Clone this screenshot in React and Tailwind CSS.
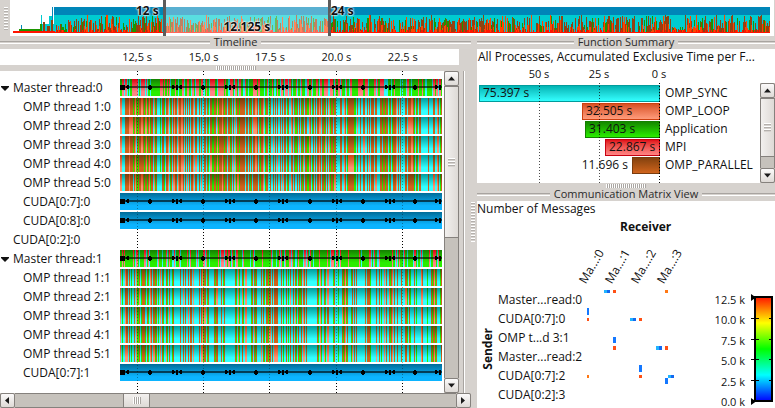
import React from "react";

const STRIPES = {
  masterA: [
    "g2r2c1r2c1g1c1g2r6c1g1c1r4c1r1c1g2c1g9r3g1r1g2r1g1r1c1g4r1g2c1g3r2c1g2r2g2c1r2g1c1r3g2r2c2g1r1g2c1r5g2c1r6g1r1",
    "c2r3g1c1r2g1c1r2g2c2r1g2c1g4r4g1r2g4c1g2r1c1g3r1g1c2g1r1g2c1r2g1c1r3c1r2g1c1g3r1c1g2c1r1g3c2r2g2r1c1g3r2g1c1r2g2r4",
    "g2r2c1r1g3c1r1g2c1r2g6r5g2r3c1g5r2c1r1g2r4c4g3c1g2r1g5c1g1c1g3c1r2g2c1g6r1g3r1g2c2g5c1r2g1r2c1r2",
  ],
  ompA: [
    "o2c3b4o1b3g1b1o1g1b1g1b2o2b1g1b1o1g1b1o1g1b2c1o1g1b1c3g1c1b2g1c1b2o1c1g1b1c1b1o1b2c1o1b2o2b1c1b1c1b1c1b1c1b2o1c1b2c2b1c1b1c2b2c1b1g1c1b2g2b2g1o1g1b3o1b1g1b2c1",
    "b2g1b1c1b1c1o1g1b2g1b5c1b2c1b1g1b1c1b2o2b1c1b1g1b2o1c1g1b2c1g1b1c2b1c1b1c1b1c2b1c1b1c1b2c1g1b1c2o1b1c1b1g2b1c1b1c1b1g1b1c1b2g2o1b1c1g1b1c1b1c1b2o1b1c1",
    "c4b2c2o1b1c1g1b6g2c1b1c2b1c2b2c2b1c1b1c1b3c1b2c3b2g1b2g1b2c1g1b1c1g1b3o1c1b1c1b1c4b2c1b3o2b1g1c1b1g1c1b2c7b1",
  ],
  masterB: [
    "g2r1g1r1g8r1g1c1r2g1c1g4r2c1g1r1c1g7c1r1g3c1g3r1c1g1r1g2c2r1c1g3r1c1g6r1g1c1r1g5c1r1c1g4r2c1r1g2c1g8r1g1c1r3c1r2g1r1",
    "r2g1c1r1g2c1r2g4c1r1g6c1g2r1c1g7r1g8r1c1g3c1g2r1c1r1g2c1r1g3r2c1r1g2c2g1r1g4c1r2c1r1g1c1r1g2c1g5r1g7r1g2c1r1",
    "r2g1c1r1g7r1g10r1g1c1g7r2c1g1c1r1g2c2r1g12r1g2c1r1c1g1r1g3c1r1g2c1g5c1r2g1c1g2c1r1c1g6r1c1g2r1",
  ],
  ompB: [
    "o1c1g1c2o1b2c1b1c1g1c2b1c1o1g2b1c1g1b3g1c1b1g1c1o1b1c1b2g1b1c1g1c1o1c1b1g1c2b1g1c1b1c2g1b1c6b1c2b1c1b1c2b1c1b2c1o1c5b1c1b1o1g1b2c1g1b1c5b1g1b2c3b1c1g1b1c5",
    "c7b1g1c1o1g1c2b1g1c1o2c4g1b1c1b1g1b1c4b1c1b1g1c1b2g1b2c1b1c1b4c3b1c1g1c2b1c1g1c1b1c2b1c1b1g1c1b1g2b1c1o1b1c1b1c3",
    "c2g1c3b1g1b1o1g1b1c3g1b1c1b1c1b1c8b1c1b3g1c5b1c2b1c1g1c2o1c1b1c2b1g1b1o1c1b1c2b1c3b1c3b2g1c1b1g1c3b1c1g1c4o1b1c2",
  ],
};

const GRADIENTS = {
  c: ["#009c9c", "#33ffff"],
  b: ["#7a3c0e", "#d0641c"],
  o: ["#cc4010", "#ff9472"],
  g: ["#148000", "#2aee00"],
  r: ["#dc0010", "#ff8484"],
};

const SECTION = 108;
const LANE = 322;

function toRuns(sections, variant) {
  const runs = [];
  sections.forEach((text, s) => {
    let x = s * SECTION;
    const end = Math.min(LANE, x + SECTION);
    const parts = text.match(/[a-z]\d+/g);
    for (let i = 0; x < end; i += 1) {
      const p = parts[i % parts.length];
      let color = p[0];
      if (variant > 0 && (i * 7 + variant * 5 + s) % 11 === 0) {
        color = { b: "o", o: "b", g: "c", c: "c", r: "r" }[color];
      }
      const w = Math.min(Number(p.slice(1)), end - x);
      runs.push({ x, w, color });
      x += w;
    }
  });
  return runs;
}

function Markers() {
  const singles = [30, 83, 136, 190, 243, 295];
  const groups = [4, 57, 110, 163, 217, 270, 320];
  return (
    <g fill="#000">
      <rect x="0" y="7" width={LANE} height="2" opacity="0.6" />
      {singles.map((x) => (
        <path key={x} d={`M${x - 1} 6h2v1h1v3h-1v1h-2v-1h-1v-3h1z`} />
      ))}
      {groups.map((x) => (
        <path
          key={x}
          d={`M${x - 5} 6h2v1h1v1h1v-2h2v2h1v-1h1v-1h2v4h-2v-1h-1v-1h-1v3h-2v-3h-1v1h-1v1h-2z`}
        />
      ))}
      <rect x="0" y="6" width="4" height="5" />
    </g>
  );
}

function Lane({ kind, variant = 0 }) {
  if (!kind) return <div className="h-[17px] flex-1" />;
  return (
    <svg
      className="h-[17px] min-w-0 flex-1"
      viewBox={`0 0 ${LANE} 17`}
      preserveAspectRatio="none"
      shapeRendering="crispEdges"
    >
      {kind === "cuda" ? (
        <rect width={LANE} height="17" fill="url(#lane-cuda)" />
      ) : (
        toRuns(STRIPES[kind], variant).map((r) => (
          <rect key={r.x} x={r.x} y="0" width={r.w} height="17" fill={`url(#lane-${r.color})`} />
        ))
      )}
      {(kind === "cuda" || kind.startsWith("master")) && <Markers />}
    </svg>
  );
}

const ROWS = [
  { label: "Master thread:0", level: 0, kind: "masterA" },
  { label: "OMP thread 1:0", level: 1, kind: "ompA", variant: 0 },
  { label: "OMP thread 2:0", level: 1, kind: "ompA", variant: 1 },
  { label: "OMP thread 3:0", level: 1, kind: "ompA", variant: 2 },
  { label: "OMP thread 4:0", level: 1, kind: "ompA", variant: 3 },
  { label: "OMP thread 5:0", level: 1, kind: "ompA", variant: 4 },
  { label: "CUDA[0:7]:0", level: 1, kind: "cuda" },
  { label: "CUDA[0:8]:0", level: 1, kind: "cuda" },
  { label: "CUDA[0:2]:0", level: 2, kind: null },
  { label: "Master thread:1", level: 0, kind: "masterB" },
  { label: "OMP thread 1:1", level: 1, kind: "ompB", variant: 0 },
  { label: "OMP thread 2:1", level: 1, kind: "ompB", variant: 1 },
  { label: "OMP thread 3:1", level: 1, kind: "ompB", variant: 2 },
  { label: "OMP thread 4:1", level: 1, kind: "ompB", variant: 3 },
  { label: "OMP thread 5:1", level: 1, kind: "ompB", variant: 4 },
  { label: "CUDA[0:7]:1", level: 1, kind: "cuda" },
];

const TICKS = ["12,5 s", "15,0 s", "17.5 s", "20.0 s", "22.5 s"];

function overviewBars() {
  let seed = 11;
  const rnd = () => {
    seed = (seed * 16807) % 2147483647;
    return seed / 2147483647;
  };
  const bars = [];
  const colors = ["#8b4513", "#8b4513", "#a03c10", "#ff4500", "#1c9600"];
  for (let x = 42; x < 757; x += 1) {
    const low = x > 657 && x < 670;
    const tall = rnd() < 0.6 ? 10 + rnd() * 8 : 4 + rnd() * 8;
    const h = Math.round(low ? 2 + rnd() * 4 : x < 54 ? tall * 0.6 : tall);
    const color = colors[Math.floor(rnd() * 5)];
    if (rnd() > 0.18) {
      bars.push({ x, h, color });
      if (rnd() < 0.25) bars.push({ x, h: Math.round(h * 0.5), color: "#ff4500" });
    }
    bars.push({ x, h: rnd() < 0.3 ? 3 : 1, color: "#ff1400" });
  }
  return bars;
}

function Overview() {
  return (
    <svg
      className="block h-[33px] w-full"
      viewBox="0 0 757 33"
      preserveAspectRatio="none"
      shapeRendering="crispEdges"
    >
      <rect x="41" y="7" width="716" height="8" fill="#0086b8" />
      <rect x="39" y="7" width="1" height="26" fill="#0086b8" />
      <rect x="41" y="15" width="716" height="18" fill="#00ccd0" />
      <rect x="27" y="24" width="14" height="9" fill="#00ccd0" />
      <rect x="36" y="16" width="3" height="17" fill="#00ccd0" />
      <rect x="27" y="24" width="2" height="9" fill="#1c9600" />
      <rect x="28" y="15" width="1" height="9" fill="#00ccd0" />
      <rect x="30" y="22" width="2" height="11" fill="#8b4513" />
      <rect x="34" y="26" width="3" height="7" fill="#8b4513" />
      <rect x="38" y="20" width="2" height="13" fill="#8b4513" />
      <rect x="6" y="29" width="23" height="3" fill="#1c9600" />
      <rect x="8" y="25" width="1" height="4" fill="#0086b8" />
      <rect x="0" y="31" width="42" height="2" fill="#ff1400" />
      {overviewBars().map((b, i) => (
        <rect key={i} x={b.x} y={33 - b.h} width="1" height={b.h} fill={b.color} />
      ))}
    </svg>
  );
}

const GRIP_V =
  "bg-[repeating-linear-gradient(180deg,#ffffff_0px,#ffffff_1px,#b4b0ac_1px,#b4b0ac_2px,#d6d2ce_2px,#d6d2ce_3px)]";
const GRIP_H =
  "bg-[repeating-linear-gradient(90deg,#ffffff_0px,#ffffff_1px,#aaa6a2_1px,#aaa6a2_2px)]";

function Arrow({ dir }) {
  const d = {
    up: "M0 5h7L3.5 1z",
    down: "M0 1h7L3.5 5z",
    left: "M5 0v7L1 3.5z",
    right: "M1 0v7L5 3.5z",
  }[dir];
  return (
    <svg width="7" height="7" viewBox={dir === "up" || dir === "down" ? "0 -0.5 7 7" : "0 0 7 7"}>
      <path d={d} fill="#1a1a1a" />
    </svg>
  );
}

function ArrowButton({ dir, label }) {
  return (
    <button
      type="button"
      aria-label={label}
      className="flex h-[15px] w-[15px] shrink-0 items-center justify-center rounded-[2px] border border-[#85817d] bg-linear-to-b from-[#fbfafa] to-[#dedad6]"
    >
      <Arrow dir={dir} />
    </button>
  );
}

function Title({ children }) {
  return (
    <h2 className="flex h-[13px] items-center gap-1 text-[11px] leading-[11px] text-[#2b2b2b]">
      <span className="h-[3px] flex-1 border-t border-b border-t-[#a8a4a0] border-b-white" />
      <span className="h-[13px]">{children}</span>
      <span className="h-[3px] flex-1 border-t border-b border-t-[#a8a4a0] border-b-white" />
    </h2>
  );
}

const DOTTED_V =
  "bg-[repeating-linear-gradient(180deg,#000000_0px,#000000_1px,transparent_1px,transparent_3px)]";

function TimelinePanel() {
  return (
    <section className="flex min-w-0 flex-1 flex-col">
      <Title>Timeline</Title>
      <div className="mr-[12px] flex h-4 bg-white pr-[17px]">
        <div className="w-[120px] shrink-0" />
        <div className="-ml-4 mr-[6px] grid flex-1 grid-cols-5 text-center text-[11px] leading-4">
          {TICKS.map((t) => (
            <span key={t}>{t}</span>
          ))}
        </div>
      </div>
      <div className="flex h-[6px] items-center justify-center">
        <div className={`h-1 w-10 ${GRIP_H}`} />
      </div>
      <div className="mr-[6px] flex flex-1">
        <div className="relative flex flex-1 flex-col gap-[2px] bg-white pt-2 pr-[2px]">
          {ROWS.map((r) => (
            <div key={r.label} className="flex h-[17px] items-center">
              <div
                className={`flex w-[120px] shrink-0 items-center whitespace-nowrap leading-[17px] ${
                  r.level === 0 ? "" : r.level === 1 ? "pl-[23px]" : "pl-[13px]"
                }`}
              >
                {r.level === 0 && (
                  <svg className="mr-1 ml-[1px]" width="8" height="6" viewBox="0 0 8 6">
                    <path d="M0 1h8v1L4 6 0 2z" fill="#111" />
                  </svg>
                )}
                {r.label}
              </div>
              <Lane kind={r.kind} variant={r.variant} />
            </div>
          ))}
          <div className="pointer-events-none absolute inset-y-0 right-[2px] left-[120px]">
            <div className="-ml-4 mr-[6px] grid h-full grid-cols-5 justify-items-center">
              {TICKS.map((t) => (
                <div key={t} className="flex flex-col gap-[2px]">
                  <span className={`h-[6px] w-px ${DOTTED_V}`} />
                  <span className={`h-[148px] w-px opacity-35 ${DOTTED_V}`} />
                  <span className={`h-[20px] w-px ${DOTTED_V}`} />
                  <span className={`h-[130px] w-px opacity-35 ${DOTTED_V}`} />
                  <span className={`h-[10px] w-px ${DOTTED_V}`} />
                </div>
              ))}
            </div>
          </div>
        </div>
        <div className="flex w-[15px] flex-col bg-[#c6c2bc]">
          <ArrowButton dir="up" label="Scroll timeline up" />
          <div className="flex h-[152px] items-center justify-center border border-[#85817d] bg-linear-to-r from-[#f2f0ee] to-[#dedad6]">
            <span className={`h-[9px] w-[7px] ${GRIP_V}`} />
          </div>
          <div className="flex-1 border-x border-[#85817d]" />
          <ArrowButton dir="down" label="Scroll timeline down" />
        </div>
        <div className="ml-1 w-[2px] border-l border-[#a8a4a0] bg-white" />
      </div>
      <div className="flex h-[15px] bg-[#c6c2bc]">
        <ArrowButton dir="left" label="Scroll timeline left" />
        <div className="w-[23%] border-y border-[#85817d]" />
        <div className="flex w-[27px] items-center justify-center border border-[#85817d] bg-linear-to-b from-[#f2f0ee] to-[#dedad6]">
          <span className={`h-[7px] w-[8px] ${GRIP_H}`} />
        </div>
        <div className="flex-1 border-y border-[#85817d]" />
        <ArrowButton dir="right" label="Scroll timeline right" />
      </div>
    </section>
  );
}

const FUNCTIONS = [
  { name: "OMP_SYNC", value: 75.397, text: "75.397 s", look: "border-[#009c9c] bg-linear-to-b from-[#00b4b4] to-[#33ffff]" },
  { name: "OMP_LOOP", value: 32.505, text: "32.505 s", look: "border-[#cc4010] bg-linear-to-b from-[#d85020] to-[#ff9c7c]" },
  { name: "Application", value: 31.403, text: "31.403 s", look: "border-[#148000] bg-linear-to-b from-[#148800] to-[#2aee00]" },
  { name: "MPI", value: 22.867, text: "22.867 s", look: "border-[#c80010] bg-linear-to-b from-[#e00818] to-[#ff8484]" },
  { name: "OMP_PARALLEL", value: 11.696, text: "11.696 s", look: "border-[#7a3c0e] bg-linear-to-b from-[#84420f] to-[#d0641c]" },
];

function FunctionSummary() {
  return (
    <section>
      <Title>Function Summary</Title>
      <div className="h-[134px] bg-white">
        <p className="h-[17px] pl-px leading-4 whitespace-nowrap">All Processes, Accumulated Exclusive Time per F...</p>
        <div className="flex h-[17px] pl-8 text-[11px] leading-4">
          <span className="w-[60px] text-center">50 s</span>
          <span className="w-[60px] text-center">25 s</span>
          <span className="w-[60px] text-center">0 s</span>
        </div>
        <div className="flex h-[100px]">
          <div className="relative flex-1 pt-[2px]">
            {FUNCTIONS.map((f) => {
              const outside = f.value < 15;
              return (
                <div key={f.name} className="flex h-[18px] items-start leading-[15px]">
                  <div className="flex w-[183px] shrink-0 justify-end">
                    {outside && <span className="mr-1">{f.text}</span>}
                    <div
                      className={`h-[17px] border pl-[3px] leading-[13px] whitespace-nowrap ${f.look}`}
                      style={{ width: `${Math.round(f.value * 2.4)}px` }}
                    >
                      {outside ? "" : f.text}
                    </div>
                  </div>
                  <span className="pl-[5px]">{f.name}</span>
                </div>
              );
            })}
            <span className={`absolute top-0 left-[62px] h-full w-px ${DOTTED_V} opacity-70`} />
            <span className={`absolute top-0 left-[122px] h-full w-px ${DOTTED_V} opacity-70`} />
            <span className={`absolute top-0 left-[182px] h-full w-px ${DOTTED_V}`} />
          </div>
          <div className="flex w-[15px] flex-col bg-[#c6c2bc]">
            <ArrowButton dir="up" label="Scroll functions up" />
            <div className="flex h-[59px] items-center justify-center border border-[#85817d] bg-linear-to-r from-[#f2f0ee] to-[#dedad6]">
              <span className={`h-[9px] w-[7px] ${GRIP_V}`} />
            </div>
            <div className="flex-1 border-x border-[#85817d]" />
            <ArrowButton dir="down" label="Scroll functions down" />
          </div>
        </div>
      </div>
    </section>
  );
}

const SENDERS = ["Master...read:0", "CUDA[0:7]:0", "OMP t...d 3:1", "Master...read:2", "CUDA[0:7]:2", "CUDA[0:2]:3"];
const RECEIVERS = ["Ma...:0", "Ma...:1", "Ma...:2", "Ma...:3"];

const CELLS = [
  [17, 0, 3, 3, "#20b4ff"], [20, 0, 3, 3, "#1468f0"], [26, 0, 3, 3, "#ff5014"], [78, 0, 3, 3, "#ff7814"],
  [0, 18, 2, 7, "#1478ff"], [0, 28, 2, 3, "#ff5014"],
  [43, 28, 3, 3, "#20b4ff"], [46, 28, 3, 3, "#1468f0"], [52, 28, 3, 3, "#ff5014"],
  [26, 47, 3, 6, "#1478ff"], [26, 56, 3, 4, "#ff5014"],
  [69, 56, 3, 4, "#20b4ff"], [72, 56, 3, 4, "#1468f0"], [78, 56, 3, 4, "#ff5014"],
  [52, 75, 3, 7, "#1478ff"], [0, 85, 2, 3, "#ff7814"], [52, 85, 3, 3, "#ff5014"],
  [81, 85, 3, 3, "#20b4ff"], [84, 85, 3, 3, "#1468f0"], [78, 88, 3, 6, "#1478ff"],
];

const SCALE = ["12.5 k", "10.0 k", "7.5 k", "5.0 k", "2.5 k", "0.0 k"];

function MatrixView() {
  return (
    <section className="flex flex-1 flex-col">
      <div className="flex h-[5px] justify-center pt-px">
        <div className={`h-1 w-10 ${GRIP_H}`} />
      </div>
      <Title>Communication Matrix View</Title>
      <div className="flex flex-1 flex-col bg-white">
        <p className="h-4 leading-4">Number of Messages</p>
        <div className="h-5 pl-[143px] leading-5 font-bold">Receiver</div>
        <div className="flex h-[53px] items-end pb-[6px] pl-[108px]">
          {RECEIVERS.map((r) => (
            <span key={r} className="h-[7px] w-[26px] origin-bottom-left -rotate-60 leading-[7px] whitespace-nowrap">
              {r}
            </span>
          ))}
        </div>
        <div className="flex">
          <div className="flex w-[21px] items-center justify-center">
            <span className="rotate-180 leading-4 font-bold [writing-mode:vertical-rl]">Sender</span>
          </div>
          <div className="w-[89px]">
            {SENDERS.map((s) => (
              <div key={s} className="h-[19px] leading-[19px] whitespace-nowrap">{s}</div>
            ))}
          </div>
          <svg className="shrink-0" width="90" height="116" viewBox="0 0 90 116" shapeRendering="crispEdges">
            {CELLS.map(([x, y, w, h, fill]) => (
              <rect key={`${x}-${y}`} x={x} y={y} width={w} height={h} fill={fill} />
            ))}
          </svg>
          <div className="ml-auto flex pr-[2px]">
            <div className="flex h-[118px] flex-col justify-between pt-1 text-right text-[11px] leading-[12px] whitespace-nowrap">
              {SCALE.map((s) => (
                <span key={s}>{s}</span>
              ))}
            </div>
            <svg className="ml-1" width="24" height="116" viewBox="0 0 24 116">
              <defs>
                <linearGradient id="scale" x1="0" y1="0" x2="0" y2="1">
                  <stop offset="0" stopColor="#ff1400" />
                  <stop offset="0.25" stopColor="#ffff00" />
                  <stop offset="0.5" stopColor="#00ff00" />
                  <stop offset="0.75" stopColor="#00ffff" />
                  <stop offset="1" stopColor="#0000ff" />
                </linearGradient>
              </defs>
              <rect x="6" y="7" width="17" height="104" fill="url(#scale)" stroke="#000" strokeWidth="2" />
              {[28, 49, 69, 90].map((y) => (
                <path key={y} d={`M2 ${y}.5h8M20 ${y}.5h3`} stroke="#000" />
              ))}
              <path d="M2 4l5 3.500-5 3.500zM2 108l5 3.500-5 3.500z" fill="#000" />
            </svg>
          </div>
        </div>
      </div>
    </section>
  );
}

export default function App() {
  return (
    <main className="flex min-h-screen flex-col overflow-hidden bg-[#d6d2ce] font-['Open_Sans','Noto_Sans',sans-serif] text-[12px] text-[#111]">
      <svg className="absolute" width="0" height="0" aria-hidden="true">
        <defs>
          {Object.entries(GRADIENTS).map(([key, [from, to]]) => (
            <linearGradient key={key} id={`lane-${key}`} x1="0" y1="0" x2="0" y2="1">
              <stop offset="0" stopColor={from} />
              <stop offset="0.75" stopColor={to} />
              <stop offset="1" stopColor={to} />
            </linearGradient>
          ))}
          <linearGradient id="lane-cuda" x1="0" y1="0" x2="0" y2="1">
            <stop offset="0" stopColor="#006c98" />
            <stop offset="0.75" stopColor="#0cb4ff" />
            <stop offset="1" stopColor="#0cb4ff" />
          </linearGradient>
        </defs>
      </svg>
      <header className="flex h-9">
        <div className="flex w-[10px] shrink-0 items-center pl-1">
          <span className={`h-[23px] w-1 ${GRIP_V}`} />
        </div>
        <div className="relative mr-px flex-1 bg-white pr-1 pl-[3px]">
          <Overview />
          <div className="absolute inset-y-0 left-[20%] w-[22%] border-x-3 border-[#5c5c5c] bg-white/35" />
          <div className="absolute inset-x-0 top-1 flex font-bold leading-[14px] [text-shadow:0_0_2px_#fff,0_0_2px_#fff,0_0_2px_#fff]">
            <span className="w-[20%] pr-1 text-right">12 s</span>
            <span className="w-[22%] pt-4 text-center">12.125 s</span>
            <span>24 s</span>
          </div>
        </div>
      </header>
      <div className="flex flex-1">
        <TimelinePanel />
        <div className="flex w-[6px] shrink-0 items-end pb-[166px]">
          <span className={`h-10 w-1 ${GRIP_V}`} />
        </div>
        <div className="flex w-[298px] shrink-0 flex-col">
          <FunctionSummary />
          <MatrixView />
        </div>
      </div>
    </main>
  );
}
